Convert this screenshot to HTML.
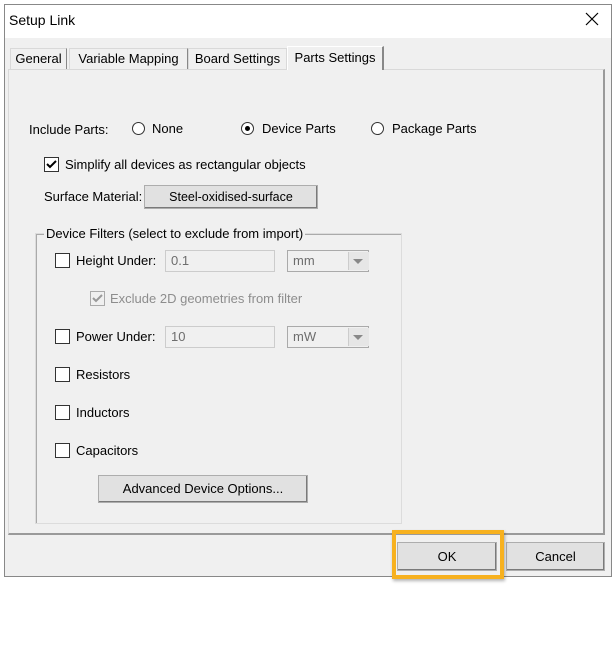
<!DOCTYPE html>
<html><head><style>
body{margin:0;width:612px;height:652px;background:#fff;font-family:"Liberation Sans",Arial,sans-serif;font-size:13px;color:#000;position:relative;overflow:hidden}
.a{position:absolute}
.t{position:absolute;white-space:nowrap;line-height:16px}
.cb{position:absolute;width:13px;height:13px;border:1px solid #333;background:#fff}
.cbd{border-color:#aaa;background:#f0f0f0}
.rd{position:absolute;width:11px;height:11px;border:1px solid #333;border-radius:50%;background:#fff}
.btn{position:absolute;background:#e1e1e1;border:1px solid #adadad;box-shadow:inset -1px -1px 0 #7a7a7a;text-align:center}
.inp{position:absolute;border:1px solid #ccc;background:#f0f0f0;color:#6d6d6d;box-sizing:border-box;padding:3px 5px;line-height:14px}
.tab{position:absolute;background:#f0f0f0;border:1px solid #d9d9d9;border-bottom:none;text-align:center;line-height:20px;box-sizing:border-box}
</style></head><body>
<div class="a" style="left:4px;top:4px;width:606px;height:571px;border:1px solid #888;background:#f0f0f0"></div>
<div class="a" style="left:5px;top:5px;width:606px;height:33px;background:#fff"></div>
<div class="t" style="left:9px;top:12px;font-size:14px">Setup Link</div>
<svg class="a" style="left:585px;top:12px" width="14" height="14"><path d="M1 1L13 13M13 1L1 13" stroke="#000" stroke-width="1.2"/></svg>
<div class="a" style="left:8px;top:69px;width:594px;height:463px;border:1px solid #d9d9d9;border-right:2px solid #9a9a9a;border-bottom:2px solid #9a9a9a;background:#f0f0f0"></div>
<div class="tab" style="left:10px;top:48px;width:57px;height:21px;border-right:1px solid #888">General</div>
<div class="tab" style="left:69px;top:48px;width:119px;height:21px;border-right:1px solid #888">Variable Mapping</div>
<div class="tab" style="left:188px;top:48px;width:99px;height:21px">Board Settings</div>
<div class="tab" style="left:287px;top:46px;width:97px;height:24px;border-right:2px solid #888;border-color:#fff #888 transparent #fff;line-height:22px">Parts Settings</div>
<div class="t" style="left:29px;top:122px">Include Parts:</div>
<div class="rd" style="left:132px;top:122px"></div><div class="t" style="left:152px;top:121px">None</div>
<div class="rd" style="left:241px;top:122px"></div><div class="a" style="left:245px;top:126px;width:5px;height:5px;border-radius:50%;background:#000"></div><div class="t" style="left:262px;top:121px">Device Parts</div>
<div class="rd" style="left:371px;top:122px"></div><div class="t" style="left:392px;top:121px">Package Parts</div>
<div class="cb" style="left:44px;top:157px"></div><svg class="a" style="left:45px;top:158px" width="13" height="13"><path d="M2 6L5 9L11 3" stroke="#000" stroke-width="2" fill="none"/></svg>
<div class="t" style="left:65px;top:157px">Simplify all devices as rectangular objects</div>
<div class="t" style="left:44px;top:189px">Surface Material:</div>
<div class="btn" style="left:144px;top:185px;width:172px;height:22px;line-height:22px;font-size:12.5px">Steel-oxidised-surface</div>
<div class="a" style="left:35px;top:233px;width:365px;height:289px;border:1px solid #dcdcdc;box-shadow:inset 1px 1px 0 #aaa"></div>
<div class="t" style="left:44px;top:226px;background:#f0f0f0;padding:0 2px">Device Filters (select to exclude from import)</div>
<div class="cb" style="left:55px;top:253px"></div><div class="t" style="left:76px;top:253px">Height Under:</div>
<div class="inp" style="left:165px;top:250px;width:110px;height:22px">0.1</div>
<div class="inp" style="left:287px;top:250px;width:82px;height:22px;border-color:#aaa">mm</div>
<div class="a" style="left:348px;top:252px;width:20px;height:18px;background:#e6e6e6;border-left:1px solid #ccc"></div><div class="a" style="left:353px;top:259px;border:5px solid transparent;border-top:5px solid #888"></div>
<div class="cb cbd" style="left:90px;top:291px"></div><svg class="a" style="left:91px;top:292px" width="13" height="13"><path d="M2 6L5 9L11 3" stroke="#999" stroke-width="2" fill="none"/></svg>
<div class="t" style="left:110px;top:291px;color:#8d8d8d">Exclude 2D geometries from filter</div>
<div class="cb" style="left:55px;top:329px"></div><div class="t" style="left:76px;top:329px">Power Under:</div>
<div class="inp" style="left:165px;top:326px;width:110px;height:22px">10</div>
<div class="inp" style="left:287px;top:326px;width:82px;height:22px;border-color:#aaa">mW</div>
<div class="a" style="left:348px;top:328px;width:20px;height:18px;background:#e6e6e6;border-left:1px solid #ccc"></div><div class="a" style="left:353px;top:335px;border:5px solid transparent;border-top:5px solid #888"></div>
<div class="cb" style="left:55px;top:367px"></div><div class="t" style="left:76px;top:367px">Resistors</div>
<div class="cb" style="left:55px;top:405px"></div><div class="t" style="left:76px;top:405px">Inductors</div>
<div class="cb" style="left:55px;top:443px"></div><div class="t" style="left:76px;top:443px">Capacitors</div>
<div class="btn" style="left:98px;top:475px;width:208px;height:26px;line-height:26px">Advanced Device Options...</div>
<div class="btn" style="left:397px;top:542px;width:98px;height:27px;line-height:27px">OK</div>
<div class="btn" style="left:506px;top:542px;width:97px;height:27px;line-height:27px">Cancel</div>
<div class="a" style="left:392px;top:530px;width:104px;height:41px;border:4px solid #f7b11f;box-shadow:1px 2px 3px rgba(0,0,0,.3)"></div>
</body></html>
